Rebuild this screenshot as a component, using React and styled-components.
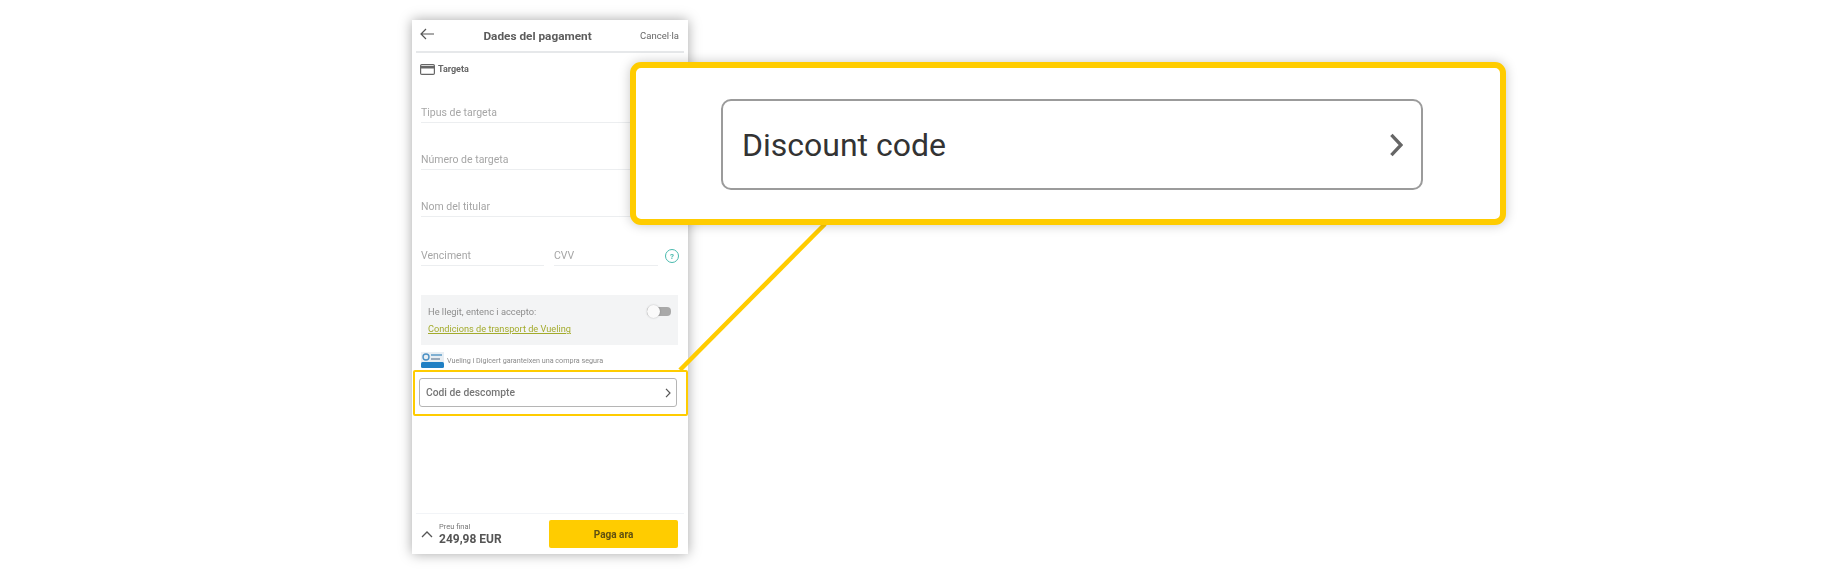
import React from 'react';
import styled, { createGlobalStyle } from 'styled-components';

const GlobalStyle = createGlobalStyle`
  html, body { margin: 0; padding: 0; background: #fff; }
  body { font-family: Roboto, "Liberation Sans", sans-serif; }
`;

const YELLOW = '#ffcc00';

const Stage = styled.div`
  position: relative;
  width: 1822px;
  height: 576px;
  box-sizing: border-box;
  padding: 20px 0 0 412px;
  overflow: hidden;
`;

const Phone = styled.div`
  width: 276px;
  height: 534px;
  display: flex;
  flex-direction: column;
  background: #fff;
  box-shadow: 0 0 12px rgba(0, 0, 0, 0.35);
`;

/* the phone capture is a soft, upscaled picture */
const Soft = styled.div`
  filter: blur(0.75px);
`;

const Header = styled.div`
  height: 31px;
  margin: 0 4px;
  padding: 0 5px 0 4px;
  display: flex;
  align-items: center;
  justify-content: space-between;
  border-bottom: 2px solid #e6e8ea;
  color: #5c5c5c;

  svg {
    margin-top: -3px;
  }
`;

const Title = styled.div`
  font-size: 11.8px;
  font-weight: 700;
  margin-left: 1px;
`;

const Cancel = styled.div`
  font-size: 9.5px;
  font-weight: 400;
  color: #666;
`;

const Form = styled.div`
  padding: 0 10px 0 9px;
  display: flex;
  flex-direction: column;
`;

const SectionLabel = styled.div`
  display: flex;
  align-items: center;
  gap: 3px;
  height: 18px;
  margin-top: 7px;
  margin-left: -1px;
  font-size: 9px;
  font-weight: 700;
  color: #666;
`;

const Field = styled.div`
  box-sizing: border-box;
  height: ${p => p.$h || 47}px;
  flex: ${p => p.$flex || 'none'};
  display: flex;
  align-items: flex-end;
  padding-bottom: 3px;
  border-bottom: 1px solid #eceef0;
  font-size: 10.5px;
  color: #a6a6a6;
`;

const ExpiryRow = styled.div`
  display: flex;
  align-items: center;
  gap: 10px;
`;

const Help = styled.div`
  box-sizing: border-box;
  width: 14px;
  height: 14px;
  flex: none;
  margin: 29px 0 0 -3px;
  border: 1.5px solid #48b9ad;
  border-radius: 50%;
  display: flex;
  align-items: center;
  justify-content: center;
  font-size: 8px;
  font-weight: 700;
  color: #48b9ad;
`;

const Terms = styled.div`
  box-sizing: border-box;
  height: 50px;
  margin-top: 29px;
  padding: 10px 7px 10px;
  background: #f3f4f5;
  display: grid;
  grid-template-columns: 1fr auto;
  row-gap: 5px;
  font-size: 9.3px;
  color: #8d8d8d;
  align-items: center;
`;

const TermsLink = styled.a`
  grid-column: 1 / -1;
  color: #a3ab2c;
  text-decoration: underline;
  font-size: 9.2px;
`;

const Toggle = styled.div`
  position: relative;
  width: 24px;
  height: 9px;
  border-radius: 4px;
  background: #a9a9a9;

  &::before {
    content: '';
    position: absolute;
    left: 0;
    top: -2px;
    width: 13px;
    height: 13px;
    border-radius: 50%;
    background: #fafafa;
    box-shadow: 0 0 2px rgba(0, 0, 0, 0.25);
  }
`;

const Secure = styled.div`
  display: flex;
  align-items: center;
  gap: 3px;
  height: 16px;
  margin-top: 7px;
  font-size: 7.2px;
  color: #8a8a8a;
`;

const Highlight = styled.div`
  box-sizing: border-box;
  height: 46px;
  margin: 2px 0 0 1px;
  padding: 6px 9px 7px 4px;
  border: 2px solid ${YELLOW};
  border-radius: 2px;
`;

const SmallDiscount = styled.div`
  box-sizing: border-box;
  height: 29px;
  padding: 0 5px 0 6px;
  display: flex;
  align-items: center;
  justify-content: space-between;
  border: 1px solid #b5b5b5;
  border-radius: 3px;
  font-size: 10.3px;
  font-weight: 500;
  color: #777;
`;

const Footer = styled.div`
  margin: auto 4px 0;
  height: 41px;
  box-sizing: border-box;
  border-top: 1px solid #f2f4f7;
  padding: 6px 6px 6px 5px;
  display: flex;
  align-items: center;
`;

const Price = styled.div`
  margin-left: 6px;
  display: flex;
  flex-direction: column;
  color: #555;
`;

const PriceLabel = styled.span`
  font-size: 7.5px;
  line-height: 9px;
  color: #777;
`;

const PriceValue = styled.span`
  font-size: 12px;
  line-height: 16px;
  font-weight: 700;
`;

const Pay = styled.div`
  margin-left: auto;
  width: 129px;
  height: 28px;
  border-radius: 2px;
  background: ${YELLOW};
  display: flex;
  align-items: center;
  justify-content: center;
  font-size: 10px;
  font-weight: 700;
  color: #5f5010;
`;

const Leader = styled.svg`
  position: absolute;
  left: 660px;
  top: 210px;
`;

const Callout = styled.div`
  position: absolute;
  left: 630px;
  top: 62px;
  width: 876px;
  height: 163px;
  box-sizing: border-box;
  padding: 1px 0 0 85px;
  display: flex;
  align-items: center;
  background: #fff;
  border: 6px solid ${YELLOW};
  border-radius: 11px;
  box-shadow: 0 0 12px rgba(0, 0, 0, 0.22);
`;

const DiscountBox = styled.div`
  box-sizing: border-box;
  width: 702px;
  height: 91px;
  padding: 1px 18px 0 19px;
  display: flex;
  align-items: center;
  justify-content: space-between;
  border: 2px solid #9b9b9b;
  border-radius: 10px;
  font-size: 32px;
  color: #333;
`;

function BackArrow() {
  return (
    <svg width="14" height="12" viewBox="0 0 14 12" fill="none" stroke="#555" strokeWidth="1.2">
      <path d="M14 6H1M6 1 1 6l5 5" />
    </svg>
  );
}

function CardIcon() {
  return (
    <svg width="15" height="11" viewBox="0 0 15 11">
      <rect x="0.6" y="0.6" width="13.8" height="9.8" rx="1.2" fill="none" stroke="#666" strokeWidth="1.2" />
      <rect x="1" y="2" width="13" height="2.5" fill="#666" />
    </svg>
  );
}

function DigicertLogo() {
  return (
    <svg width="23" height="16" viewBox="0 0 23 16">
      <rect width="23" height="11" fill="#e8eef3" />
      <circle cx="5" cy="5" r="3" fill="none" stroke="#4a90c4" strokeWidth="1.4" />
      <rect x="10" y="2" width="11" height="2" fill="#7fb0d2" />
      <rect x="10" y="6" width="9" height="2" fill="#9ab" />
      <rect y="10" width="23" height="6" rx="1.5" fill="#1f7fc4" />
    </svg>
  );
}

function Chevron({ size, color, width }) {
  return (
    <svg width={size * 0.6} height={size} viewBox="0 0 6 10" fill="none" stroke={color} strokeWidth={width}>
      <path d="M1 .8 5 5 1 9.2" />
    </svg>
  );
}

export default function App() {
  return (
    <Stage>
      <GlobalStyle />
      <Phone>
        <Soft>
          <Header>
            <BackArrow />
            <Title>Dades del pagament</Title>
            <Cancel>Cancel·la</Cancel>
          </Header>
          <Form>
            <SectionLabel>
              <CardIcon />
              Targeta
            </SectionLabel>
            <Field $h={45}>Tipus de targeta</Field>
            <Field>Número de targeta</Field>
            <Field>Nom del titular</Field>
            <ExpiryRow>
              <Field $h={49} $flex="0 0 123px">Venciment</Field>
              <Field $h={49} $flex="0 0 104px">CVV</Field>
              <Help>?</Help>
            </ExpiryRow>
            <Terms>
              He llegit, entenc i accepto:
              <Toggle />
              <TermsLink>Condicions de transport de Vueling</TermsLink>
            </Terms>
            <Secure>
              <DigicertLogo />
              Vueling i Digicert garanteixen una compra segura
            </Secure>
          </Form>
        </Soft>
        <Highlight>
          <Soft>
            <SmallDiscount>
              Codi de descompte
              <Chevron size={10} color="#555" width={1.2} />
            </SmallDiscount>
          </Soft>
        </Highlight>
        <Footer as={Soft}>
          <svg width="12" height="7" viewBox="0 0 12 7" fill="none" stroke="#555" strokeWidth="1.3">
            <path d="M1 6 6 1l5 5" />
          </svg>
          <Price>
            <PriceLabel>Preu final</PriceLabel>
            <PriceValue>249,98 EUR</PriceValue>
          </Price>
          <Pay>Paga ara</Pay>
        </Footer>
      </Phone>
      <Leader width="180" height="170" viewBox="0 0 180 170">
        <path d="M165 14 20 160" stroke={YELLOW} strokeWidth="4.5" fill="none" />
      </Leader>
      <Callout>
        <DiscountBox>
          Discount code
          <Chevron size={24} color="#666" width={1.4} />
        </DiscountBox>
      </Callout>
    </Stage>
  );
}
